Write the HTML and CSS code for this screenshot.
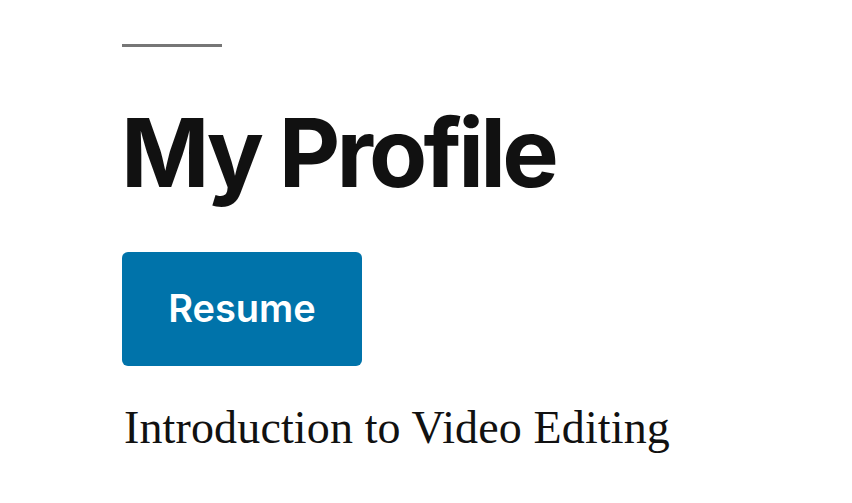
FILE: index.html
```html
<!DOCTYPE html>
<html>
 <head>
  <meta charset="utf-8">
  <link rel="stylesheet" href="styles.css">
 </head>
 <body>
  <div class="page">
   <hr class="rule">
   <h1 class="title">My Profile</h1>
   <a class="button" href="#">Resume</a>
   <p class="intro">Introduction to Video Editing</p>
  </div>
 </body>
</html>
```
FILE: styles.css
```css
body {
  margin: 0;
  background: #fff;
  color: #111;
}

.page {
  padding: 44px 0 0 122px;
  display: flex;
  flex-direction: column;
  align-items: flex-start;
}

.rule {
  width: 100px;
  height: 3px;
  margin: 0;
  border: none;
  background: #767676;
}

.title {
  font-family: Inter, sans-serif;
  font-weight: 700;
  font-size: 95px;
  line-height: 1.2;
  letter-spacing: -0.04em;
  margin: 49px 0 0 -1px;
  color: #111;
}

.button {
  font-family: Inter, sans-serif;
  font-weight: 600;
  font-size: 38px;
  line-height: 1.2;
  width: 240px;
  padding: 34px 0;
  margin-top: 42px;
  text-align: center;
  color: #fff;
  background: #0073aa;
  border-radius: 6px;
  text-decoration: none;
}

.intro {
  font-family: "Liberation Serif", serif;
  font-size: 46px;
  line-height: 1.2;
  letter-spacing: 0.003em;
  margin: 34px 0 0 2px;
  color: #111;
}
```
